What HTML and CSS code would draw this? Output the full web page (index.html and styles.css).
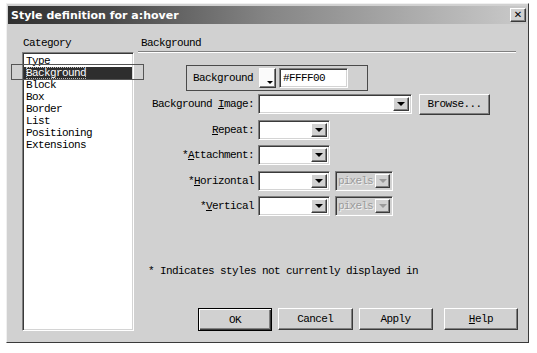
FILE: index.html
```html
<!DOCTYPE html>
<html lang="en">

<head>
    <meta charset="UTF-8">
    <title>Style definition for a:hover</title>
    <link rel="stylesheet" href="styles.css">
</head>

<body>
    <div class="window">
        <div class="titlebar">
            <span class="title">Style definition for a:hover</span>
            <button class="close">&#x2715;</button>
        </div>
        <div class="content">
            <div class="category">
                <div class="caption">Category</div>
                <ul class="listbox">
                    <li>Type</li>
                    <li class="active"><span>Background</span></li>
                    <li>Block</li>
                    <li>Box</li>
                    <li>Border</li>
                    <li>List</li>
                    <li>Positioning</li>
                    <li>Extensions</li>
                </ul>
            </div>
            <div class="panel">
                <div class="caption heading">Background</div>
                <div class="rule"></div>

                <div class="group">
                    <span class="group-label">Background</span>
                    <span class="swatch"><i></i></span>
                    <span class="field color">#FFFF00</span>
                </div>

                <div class="form">
                    <label>Background <u>I</u>mage:</label>
                    <div class="line">
                        <span class="field combo wide"><b class="drop"></b></span>
                        <button class="btn browse">Browse...</button>
                    </div>

                    <label><u>R</u>epeat:</label>
                    <div class="line">
                        <span class="field combo"><b class="drop"></b></span>
                    </div>

                    <label>*<u>A</u>ttachment:</label>
                    <div class="line">
                        <span class="field combo"><b class="drop"></b></span>
                    </div>

                    <label>*<u>H</u>orizontal</label>
                    <div class="line">
                        <span class="field combo"><b class="drop"></b></span>
                        <span class="field combo unit disabled">pixels<b class="drop"></b></span>
                    </div>

                    <label>*<u>V</u>ertical</label>
                    <div class="line">
                        <span class="field combo"><b class="drop"></b></span>
                        <span class="field combo unit disabled">pixels<b class="drop"></b></span>
                    </div>
                </div>

                <p class="note">* Indicates styles not currently displayed in</p>

                <div class="buttons">
                    <button class="btn default">OK</button>
                    <button class="btn">Cancel</button>
                    <button class="btn">Apply</button>
                    <button class="btn help"><u>H</u>elp</button>
                </div>
            </div>
        </div>
    </div>
</body>

</html>
```

FILE: styles.css
```css
* {
    padding: 0;
    margin: 0;
    box-sizing: border-box;
}

body {
    background: #fff;
    font-family: "Liberation Mono", monospace;
    font-size: 11px;
    letter-spacing: -0.6px;
    color: #000;
}

.window {
    margin: 3px 0 0 6px;
    width: 523px;
    height: 340px;
    padding: 2px 1px 1px 1px;
    background: #d1d1d1;
    border: 1px solid;
    border-color: #f0f0f0 #3a3a3a #3a3a3a #f0f0f0;
}

.titlebar {
    height: 18px;
    display: flex;
    align-items: center;
    justify-content: space-between;
    padding: 0 1px 0 3px;
    background: linear-gradient(to right, #303030, #4a4a4a 20%, #858585 50%, #cacaca);
}

.title {
    font-family: "DejaVu Sans", sans-serif;
    font-weight: bold;
    font-size: 11px;
    letter-spacing: 0;
    color: #fff;
}

.close {
    width: 16px;
    height: 14px;
    font-family: "DejaVu Sans", sans-serif;
    font-size: 10px;
    font-weight: bold;
    letter-spacing: 0;
    line-height: 10px;
    background: #d1d1d1;
    border: 1px solid;
    border-color: #fff #3a3a3a #3a3a3a #fff;
    box-shadow: inset -1px -1px #808080;
}

.content {
    display: flex;
    padding: 13px 0 0 14px;
}

.caption {
    line-height: 12px;
    padding-left: 1px;
}

.listbox {
    list-style: none;
    margin-top: 3px;
    width: 112px;
    height: 279px;
    padding: 2px 0 0 0;
    background: #fff;
    border: 1px solid;
    border-color: #808080 #fff #fff #808080;
    box-shadow: inset 1px 1px #3a3a3a, inset -1px -1px #d4d4d4;
}

.listbox li {
    line-height: 12px;
    padding: 0 1px 0 2px;
    margin-left: 1px;
}

.listbox li.active {
    position: relative;
    background: #2e2e2e;
    color: #fff;
    margin-right: 1px;
}

.listbox li.active span {
    outline: 1px dotted #bbb;
    outline-offset: -1px;
}

.listbox li.active::after {
    content: '';
    position: absolute;
    left: -13px;
    right: -12px;
    top: -3px;
    bottom: -1px;
    border: 1px solid #555;
}

.panel {
    margin-left: 4px;
    width: 380px;
}

.heading {
    padding-left: 3px;
}

.rule {
    margin-top: 2px;
    width: 378px;
    border-top: 1px solid #808080;
    border-bottom: 1px solid #fff;
}

.group {
    display: flex;
    align-items: center;
    margin: 12px 0 0 48px;
    width: 182px;
    height: 26px;
    padding-left: 6px;
    border: 1px solid #4a4a4a;
}

.group-label {
    width: 66px;
}

.field {
    position: relative;
    display: inline-flex;
    align-items: center;
    height: 20px;
    padding-left: 3px;
    background: #fff;
    border: 1px solid;
    border-color: #808080 #fff #fff #808080;
    box-shadow: inset 1px 1px #3a3a3a, inset -1px -1px #d4d4d4;
}

.swatch {
    position: relative;
    width: 17px;
    height: 20px;
    margin-right: 3px;
    background: #fafafa;
    border: 1px solid;
    border-color: #fff #3a3a3a #3a3a3a #fff;
    box-shadow: inset -1px -1px #808080;
}

.swatch i {
    position: absolute;
    right: 2px;
    bottom: 3px;
    border-left: 3px solid transparent;
    border-right: 3px solid transparent;
    border-top: 3px solid #000;
}

.color {
    width: 69px;
}

.form {
    display: grid;
    grid-template-columns: 116px 1fr;
    column-gap: 4px;
    row-gap: 5.5px;
    margin-top: 3px;
}

.form label {
    line-height: 20px;
    text-align: right;
}

.line {
    display: flex;
    align-items: center;
    height: 20px;
}

.combo {
    width: 72px;
}

.combo.wide {
    width: 154px;
}

.combo.unit {
    width: 58px;
    margin-left: 5px;
    padding-left: 2px;
    letter-spacing: -0.8px;
}

.drop {
    position: absolute;
    right: 2px;
    top: 2px;
    bottom: 2px;
    width: 16px;
    display: flex;
    align-items: center;
    justify-content: center;
    background: #d1d1d1;
    border: 1px solid;
    border-color: #fff #3a3a3a #3a3a3a #fff;
    box-shadow: inset -1px -1px #808080;
}

.unit .drop {
    width: 15px;
}

.drop::before {
    content: '';
    border-left: 4px solid transparent;
    border-right: 4px solid transparent;
    border-top: 4px solid #000;
}

.disabled {
    background: #d1d1d1;
    color: #9a9a9a;
    text-shadow: 1px 1px #f2f2f2;
}

.disabled .drop::before {
    border-top-color: #9a9a9a;
}

.btn {
    height: 22px;
    width: 75px;
    font-family: inherit;
    font-size: 11px;
    letter-spacing: -0.6px;
    background: #d1d1d1;
    border: 1px solid;
    border-color: #fff #3a3a3a #3a3a3a #fff;
    box-shadow: inset -1px -1px #808080;
}

.browse {
    width: 71px;
    height: 21px;
    margin-left: 7px;
}

.note {
    margin-top: 49px;
    padding-left: 10px;
    line-height: 12px;
}

.buttons {
    display: flex;
    gap: 6px;
    margin: 31px 0 0 60px;
}

.btn.default {
    height: 23px;
    border: 1px solid #000;
    box-shadow: inset 1px 1px #fff, inset -1px -1px #3a3a3a, inset -2px -2px #808080;
}

.btn.help {
    margin-left: 5px;
}
```
